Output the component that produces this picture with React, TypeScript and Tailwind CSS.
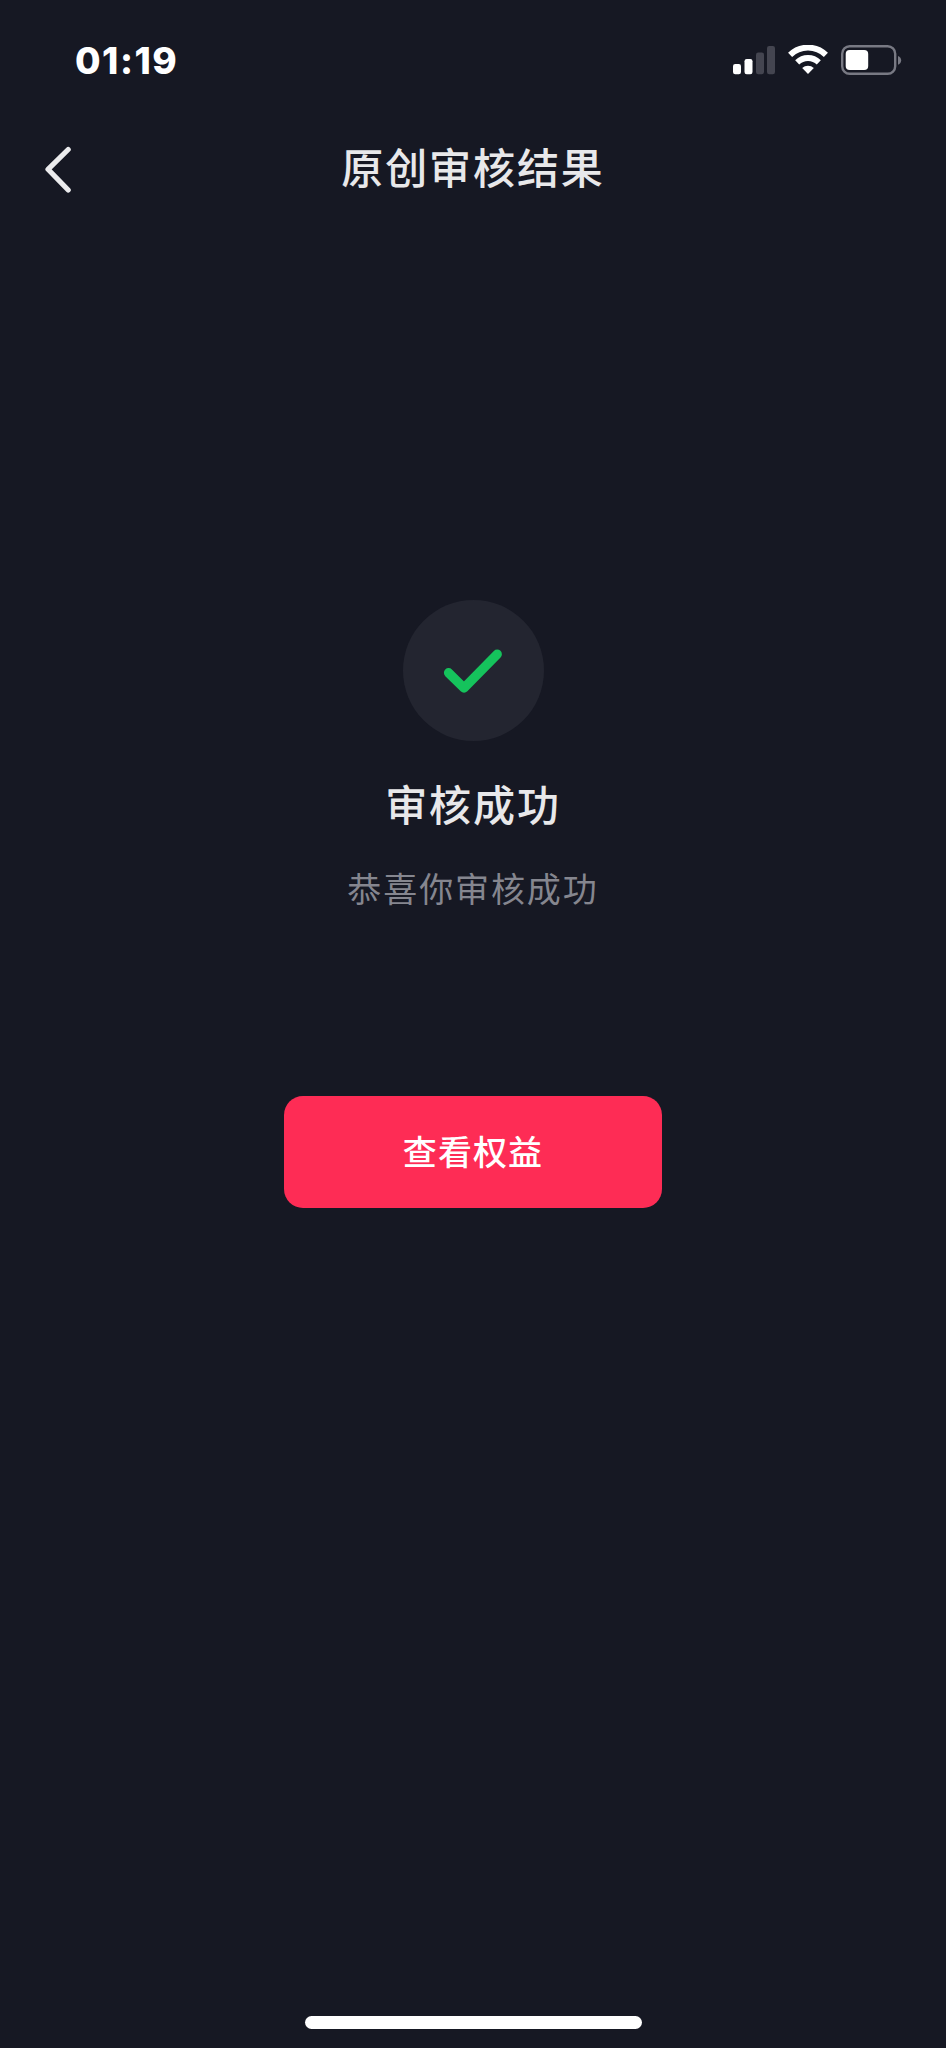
function StatusBar() {
  return (
    <div className="flex h-[120px] items-center justify-between pl-[75px] pr-[44px]">
      <span className="font-['Inter',sans-serif] text-[37px] font-extrabold leading-none tracking-[1.5px] text-white">01:19</span>
      <div className="flex items-center">
        <svg width="42" height="30" viewBox="0 0 42 30" fill="#fff">
          <rect x="0" y="19" width="8" height="10.2" rx="2.2" />
          <rect x="11.5" y="14" width="8" height="15.2" rx="2.2" />
          <g fill="#444550">
            <rect x="23" y="7.5" width="8" height="21.7" rx="2.2" />
            <rect x="34" y="1" width="8" height="28.2" rx="2.2" />
          </g>
        </svg>
        <svg className="ml-[13px]" width="40" height="30" viewBox="0 0 40 30" fill="none" stroke="#fff" strokeWidth="5.8">
          <path d="M2.1 9.9A25.5 25.5 0 0 1 37.9 9.9" />
          <path d="M9.2 17.4A15.4 15.4 0 0 1 30.8 17.4" />
          <path d="M20 29L14.2 23.1A8.2 8.2 0 0 1 25.8 23.1Z" fill="#fff" stroke="none" />
        </svg>
        <svg className="ml-[13px]" width="61" height="30" viewBox="0 0 61 30">
          <rect x="1.2" y="1.2" width="53" height="27.6" rx="7.5" fill="none" stroke="#787983" strokeWidth="2.4" />
          <rect x="4.7" y="5" width="22.5" height="20" rx="4" fill="#fff" />
          <path d="M57 11C61.2 12.2 61.2 18.5 57 19.7Z" fill="#787983" />
        </svg>
      </div>
    </div>
  )
}

export default function App() {
  return (
    <div className="flex h-[2048px] w-[946px] flex-col bg-[#161823] font-['Noto_Sans_CJK_SC',sans-serif]">
      <StatusBar />

      <header className="grid h-[98px] grid-cols-[44px_1fr_44px] items-center px-[36px]">
        <button type="button" aria-label="返回">
          <svg width="44" height="48" viewBox="0 0 44 48" fill="none" stroke="#ebebed" strokeWidth="5.2" strokeLinecap="round" strokeLinejoin="round">
            <path d="M32.2 4.5L12 24.3L32.2 45" />
          </svg>
        </button>
        <h1 className="pb-[6px] text-center text-[42px] font-medium leading-[60px] tracking-[1.9px] text-[#e8e8ea]">原创审核结果</h1>
      </header>

      <main className="flex flex-1 flex-col items-center pt-[382px]">
        <div className="flex size-[141px] items-center justify-center rounded-full bg-[#232530]">
          <svg width="60" height="60" viewBox="0 0 60 60" fill="none" stroke="#15c35c" strokeWidth="9.4" strokeLinecap="round" strokeLinejoin="round">
            <path d="M5.6 31.8L21 47L54.2 13.2" />
          </svg>
        </div>
        <h2 className="mt-[32px] text-[42px] font-medium leading-[60px] tracking-[1.9px] text-[#e8e8ea]">审核成功</h2>
        <p className="mt-[30px] text-[34px] leading-[50px] tracking-[1.9px] text-[#85868f]">恭喜你审核成功</p>
        <button
          type="button"
          className="mt-[183px] h-[112px] w-[378px] rounded-[19px] bg-[#fe2c55] pb-[3px] text-[34px] font-medium tracking-[1.1px] text-white"
        >
          查看权益
        </button>
      </main>

      <div className="mb-[19px] h-[13px] w-[337px] self-center rounded-full bg-white" />
    </div>
  )
}
